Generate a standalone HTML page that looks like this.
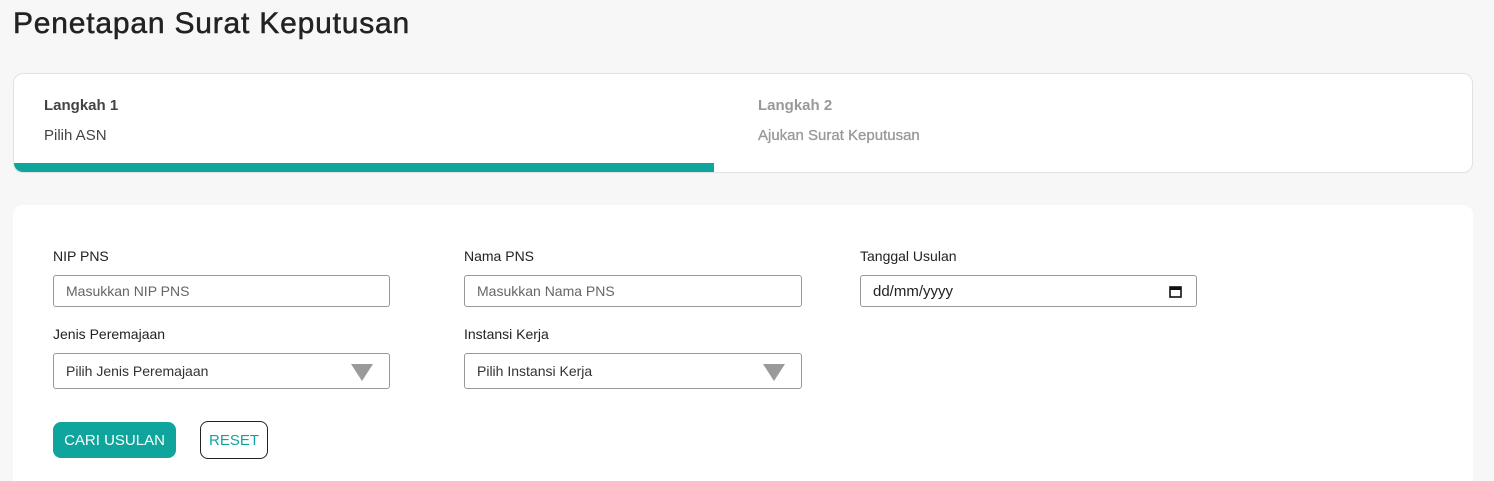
<!DOCTYPE html><html><head><style>
html,body{margin:0;width:1494px;height:481px;overflow:hidden}
body{background:#f7f7f7;font-family:"Liberation Sans",sans-serif;position:relative}
.a{position:absolute}
h1{position:absolute;left:13px;top:7px;margin:0;font-size:30px;font-weight:normal;color:#222;letter-spacing:0.8px;-webkit-text-stroke:0.5px #222}
.card{background:#fff;border:1px solid #e2e2e2;border-radius:10px;overflow:hidden}
.lb{font-size:14px;color:#222}
.in{background:#fff;border:1px solid #999;border-radius:3px;box-sizing:border-box;font-size:14px;color:#666;padding-left:12px;display:flex;align-items:center}
.tri{position:absolute;right:16px;top:10px;width:0;height:0;border-left:11px solid transparent;border-right:11px solid transparent;border-top:17px solid #9a9a9a}
</style></head><body>
<h1>Penetapan Surat Keputusan</h1>
<div class="a card" style="left:13px;top:73px;width:1458px;height:98px">
<div class="a" style="left:30px;top:23px;font-size:15px;font-weight:bold;color:#444">Langkah 1</div>
<div class="a" style="left:30px;top:53px;font-size:15px;color:#444">Pilih ASN</div>
<div class="a" style="left:744px;top:23px;font-size:15px;font-weight:bold;color:#999">Langkah 2</div>
<div class="a" style="left:744px;top:53px;font-size:15px;color:#999;-webkit-text-stroke:0.3px #999">Ajukan Surat Keputusan</div>
<div class="a" style="left:0;top:89px;width:700px;height:10px;background:#10a59c"></div>
</div>
<div class="a card" style="left:13px;top:205px;width:1460px;height:300px;border:none"></div>
<div class="a lb" style="left:53px;top:248px">NIP PNS</div>
<div class="a lb" style="left:464px;top:248px">Nama PNS</div>
<div class="a lb" style="left:860px;top:248px">Tanggal Usulan</div>
<div class="a in" style="left:53px;top:275px;width:337px;height:32px">Masukkan NIP PNS</div>
<div class="a in" style="left:464px;top:275px;width:338px;height:32px">Masukkan Nama PNS</div>
<div class="a in" style="left:860px;top:275px;width:337px;height:32px;color:#222;font-size:15px">dd/mm/yyyy
<svg class="a" style="right:14px;top:9px" width="13" height="13" viewBox="0 0 13 13"><rect x="1" y="2" width="11" height="10" fill="none" stroke="#111" stroke-width="1.6"/><rect x="1" y="2" width="11" height="3" fill="#111"/></svg></div>
<div class="a lb" style="left:53px;top:326px">Jenis Peremajaan</div>
<div class="a lb" style="left:464px;top:326px">Instansi Kerja</div>
<div class="a in" style="left:53px;top:353px;width:337px;height:36px;color:#333">Pilih Jenis Peremajaan<div class="tri"></div></div>
<div class="a in" style="left:464px;top:353px;width:338px;height:36px;color:#333">Pilih Instansi Kerja<div class="tri"></div></div>
<div class="a" style="left:53px;top:422px;width:123px;height:36px;background:#10a59c;border-radius:8px;color:#fff;font-size:15px;display:flex;align-items:center;justify-content:center">CARI USULAN</div>
<div class="a" style="left:200px;top:421px;width:66px;height:36px;border:1px solid #222;border-radius:8px;color:#10a59c;font-size:15px;display:flex;align-items:center;justify-content:center">RESET</div>
</body></html>
